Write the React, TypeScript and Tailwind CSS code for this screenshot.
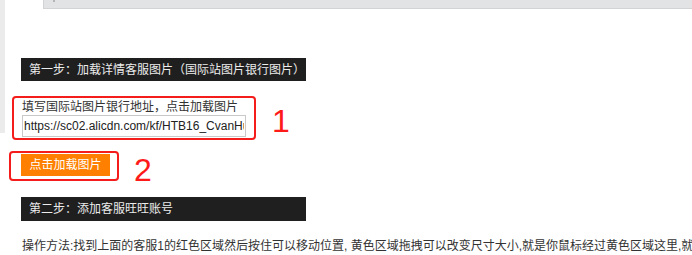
import React from "react";

export default function App() {
  return (
    <div
      className="relative w-[692px] h-[255px] overflow-hidden bg-white text-[12px] text-[#333]"
      style={{ fontFamily: '"Liberation Sans", "Noto Sans CJK SC", sans-serif' }}
    >
      <div className="absolute left-0 top-0 w-[5px] h-[133px] bg-[#ebebeb]" />

      <div className="ml-[43px] h-[9px] bg-[#e2e3e5] border-b border-l border-[#d2d3d5] flex">
        <div className="ml-[9px] w-[2px] h-[2px] bg-[#b5b5b5]" />
      </div>

      <div className="mt-[49px] ml-[21px] w-[285px] h-[23px] bg-[#1f1f1f] text-[#ececec] pl-[8px] flex items-center leading-none">
        第一步：加载详情客服图片（国际站图片银行图片）
      </div>

      <div className="mt-[15px] flex items-start">
        <div className="ml-[12px] w-[244px] h-[44px] border-2 border-[#f51c1c] rounded-[4px] pl-[8px] pt-[1px]">
          <div className="leading-[16px] text-[#333]">填写国际站图片银行地址，点击加载图片</div>
          <input
            readOnly
            defaultValue="https://sc02.alicdn.com/kf/HTB16_CvanHuOeJjSZFzq6zJKXXaE.jpg"
            className="block w-[224px] h-[22px] border border-[#c9c9c9] px-[1px] text-[12px] text-[#222] outline-none bg-white"
            style={{ fontFamily: '"Liberation Sans", sans-serif' }}
          />
        </div>
        <div className="ml-[16px] mt-[9px] text-[32px] leading-[32px] text-[#ff1a1a]">1</div>
      </div>

      <div className="mt-[11px] flex items-start">
        <div className="ml-[9px] w-[110px] h-[30px] border-2 border-[#f51c1c] rounded-[4px] pl-[10px] pt-[1px]">
          <div className="w-[89px] h-[22px] bg-[#ff7f00] text-white flex items-center justify-center leading-none">
            点击加载图片
          </div>
        </div>
        <div className="ml-[15px] mt-[3px] text-[32px] leading-[32px] text-[#ff1a1a]">2</div>
      </div>

      <div className="mt-[11px] ml-[21px] w-[285px] h-[24px] bg-[#1f1f1f] text-[#ececec] pl-[8px] flex items-center leading-none">
        第二步：添加客服旺旺账号
      </div>

      <div className="mt-[16px] ml-[22px] leading-[18px] whitespace-nowrap text-[#333]">
        <div>操作方法:找到上面的客服1的红色区域然后按住可以移动位置, 黄色区域拖拽可以改变尺寸大小,就是你鼠标经过黄色区域这里,就会出现可以拖拽的箭头</div>
        <div>能出现区域使用</div>
      </div>
    </div>
  );
}
